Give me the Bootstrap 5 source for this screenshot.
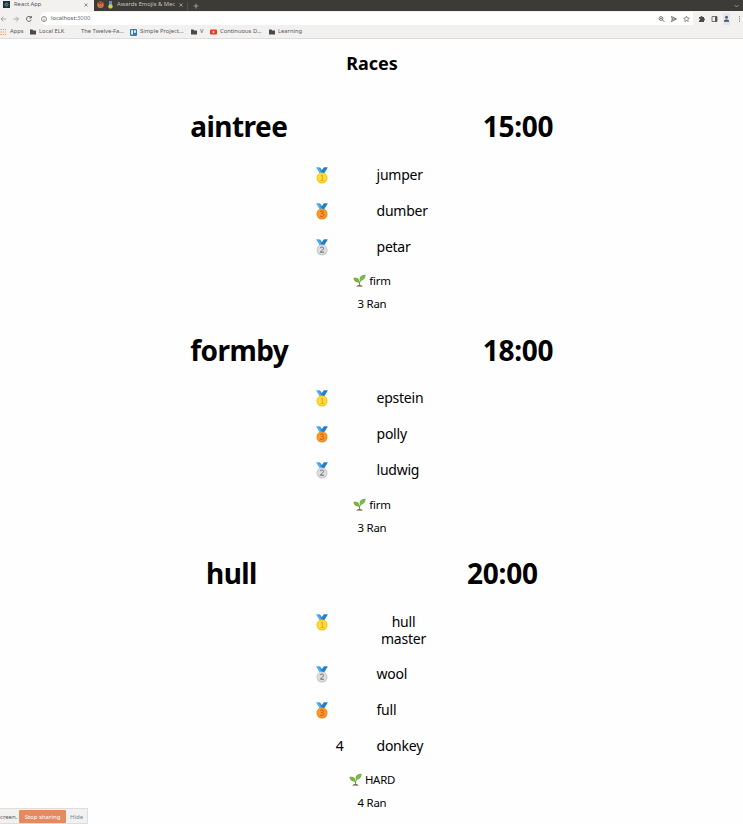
<!DOCTYPE html>
<html lang="en">
<head>
<meta charset="utf-8">
<title>React App</title>
<link href="https://cdn.jsdelivr.net/npm/bootstrap@5.3.0/dist/css/bootstrap.min.css" rel="stylesheet">
<style>
body{width:743px;height:824px;overflow:hidden;background:#fefefe;color:#000;font-family:"Noto Sans",sans-serif;position:relative}
svg{display:block;flex:none}
.chrome{font-size:5.8px;line-height:1;color:#555;font-family:"Noto Sans",sans-serif}
.tabs{height:11px;background:#3c3b37;color:#c4c2bc}
.tab-on{width:94px;height:11px;background:#f2f1f0;color:#555;padding:0 6px 2px 3px}
.tab-off{width:93px;padding:0 4px 2px 3px}
.tools{height:14px;background:#f2f1f0;padding:1px 1px 0 0}
.address{background:#fff;height:13px;width:653px;padding:1px 3px 0 1px;margin-left:8px;border-radius:6px 0 0 6px}
.marks{height:14px;background:#f2f1f0;border-bottom:1px solid #dedddc}
.marks .mk{gap:3px;height:13px;padding-top:1px;white-space:nowrap}
.w-a{width:29px}.w-b{width:52px}.w-c{width:49px}.w-d{width:61px}.w-e{width:19px}.w-f{width:59px}
.title{font-size:18px;font-weight:700;line-height:24px;margin:12px 0 27px;padding-left:1px}
.race{height:223.7px}
.race-head{height:48px;gap:4px;font-size:28px;font-weight:700;line-height:48px;letter-spacing:-.55px;margin-bottom:7px}
.race-head span{white-space:nowrap}
.venue{width:98px}.venue.short{width:51px}
.race-head .hour{width:70px;letter-spacing:-.25px}
.runner{min-height:36px;padding-left:315.5px;font-size:14px;line-height:16.5px;letter-spacing:-.23px}
.runner.two{min-height:52px;padding-top:10px}
.place{width:28px;margin-right:33px}
.horse{width:54px}
.info{font-size:11.4px;line-height:23px;letter-spacing:-.22px;padding-left:1px}
.going{margin-top:4px;gap:3px}
.share{position:absolute;left:0;bottom:0;width:88px;height:16px;background:#f2f1f0;border:1px solid #dfdedd;border-left:0;font-size:6px;line-height:1;color:#555;white-space:nowrap;padding-top:1px}
.share .crop{width:19px}
.stop{width:47px;height:13px;background:#e58a5f;color:#fff;border-radius:1px;margin-right:4px}
.hide{color:#6f8796}
</style>
<script src="https://cdn.jsdelivr.net/npm/bootstrap@5.3.0/dist/js/bootstrap.bundle.min.js"></script>
</head>
<body>
<svg width="0" height="0" class="position-absolute">
<defs>
<symbol id="ribbon" viewBox="0 0 12 17"><path d="M.3.5h3.8L6 3.2 7.9.5h3.8L8.2 6H3.8z" fill="#2e94df"/><path d="M7.9.5h3.8L8.2 6H5.1L4.6 5z" fill="#2380c8"/><path d="M.3.500h2L5.800 6h-2z" fill="#55b4ef"/></symbol>
<symbol id="m1" viewBox="0 0 12 17"><use href="#ribbon" width="12" height="17"/><circle cx="6" cy="11" r="5.500" fill="#f0c41d"/><circle cx="6" cy="10.800" r="4.600" fill="#ffdc35"/><path d="M4.800 9l1.500-1v5.400M4.800 13.400h2.800" fill="none" stroke="#e0a91b" stroke-width="1"/></symbol>
<symbol id="m2" viewBox="0 0 12 17"><use href="#ribbon" width="12" height="17"/><circle cx="6" cy="11" r="5.500" fill="#c6c7c9"/><circle cx="6" cy="10.800" r="4.600" fill="#dddee0"/><path d="M4.200 9.200C4.500 7.500 7.800 7.700 7.500 9.500 7.300 10.800 5.500 11.700 4.300 13.200h3.600" fill="none" stroke="#66696d" stroke-width="1"/></symbol>
<symbol id="m3" viewBox="0 0 12 17"><use href="#ribbon" width="12" height="17"/><circle cx="6" cy="11" r="5.500" fill="#ee8719"/><circle cx="6" cy="10.800" r="4.600" fill="#fa9a2c"/><path d="M4.200 8.600C5 7.600 7.600 7.800 7.400 9.300 7.200 10.400 6.400 10.500 5.500 10.500 8.800 10.500 8.200 13.500 6 13.500 5 13.500 4.400 13.200 4 12.700" fill="none" stroke="#c95a16" stroke-width="1"/></symbol>
<symbol id="sprout" viewBox="0 0 13 13"><path d="M6.800 12C6.500 9 6.200 8 4.700 6.400M6.500 10C6.600 8 7.300 6.400 9.500 4" fill="none" stroke="#659238" stroke-width="1"/><path d="M.3 4.200C3 3.200 6.600 4.200 6.400 8.400 3.500 9 1.200 7.300.3 4.200z" fill="#6eaa3d"/><path d="M12.700.8C9.200.7 5.600 2.400 6.800 6.900 10.800 7 12.300 4.200 12.700.8z" fill="#75b344"/><path d="M7.500 6L11.500 2M1.500 4.800L5.600 7.300" stroke="#9bcf6c" stroke-width=".6"/><path d="M3.200 12.600C4 10.900 9 10.900 9.800 12.600z" fill="#6b4638"/></symbol>
<symbol id="folder" viewBox="0 0 6 6"><path d="M0 .6h2.500l.6.8H6v4H0z" fill="#4b4a48"/></symbol>
</defs>
</svg>

<header class="chrome d-flex flex-column">
  <div class="tabs d-flex align-items-center">
    <div class="tab-on d-flex align-items-center">
      <svg width="7" height="7" viewBox="0 0 7 7"><path d="M0 0h7v7H0z" fill="#222b33"/><g fill="none" stroke="#55afc7" stroke-width=".5"><ellipse cx="3.500" cy="3.500" rx="2.200" ry=".9"/><ellipse cx="3.500" cy="3.500" rx=".9" ry="2.200"/></g></svg>
      <span class="me-auto ps-1">React App</span>
      <svg width="4" height="4" viewBox="0 0 4 4"><path d="M.5.5l3 3m0-3l-3 3" stroke="#666" stroke-width=".7"/></svg>
    </div>
    <div class="tab-off d-flex align-items-center">
      <svg width="7" height="7" viewBox="0 0 7 7"><circle cx="3.500" cy="3.700" r="3.200" fill="#e27b43"/><path d="M.6 1.500L2 .5l1.500.8L5 .5l1.400 1-.7 1.200H1.200z" fill="#a6462b"/><path d="M2 3.500h1m1 0h1M2 5.200h3" stroke="#8a4030" stroke-width=".6"/></svg>
      <svg class="ms-1" width="5" height="8" viewBox="0 0 5 8"><path d="M1 0h3v4H1z" fill="#4698ce"/><circle cx="2.500" cy="5.400" r="2.200" fill="#e5c747"/></svg>
      <span class="ms-1 me-auto text-nowrap">Awards Emojis &amp; Mec</span>
      <svg width="4" height="4" viewBox="0 0 4 4"><path d="M.5.5l3 3m0-3l-3 3" stroke="#bbb" stroke-width=".7"/></svg>
    </div>
    <svg width="12" height="8" viewBox="0 0 12 8"><path d="M.5 0v8" stroke="#66645e" stroke-width=".6"/><path d="M9 1.500v5M6.500 4h5" stroke="#bbb" stroke-width=".7"/></svg>
    <svg class="ms-auto me-1" width="5" height="4" viewBox="0 0 5 4"><path d="M.5 1l2 2 2-2" fill="none" stroke="#aaa" stroke-width=".8"/></svg>
  </div>
  <div class="tools d-flex align-items-center">
    <svg width="32" height="8" viewBox="0 0 32 8" fill="none" stroke="#999" stroke-width=".8"><path d="M6 4H1m2.400-2.400L1 4l2.400 2.400M13.500 4h5m-2.400-2.400L18.500 4l-2.400 2.400"/><path d="M31 2.400A2.500 2.500 0 1 0 31.300 4.800M31.300 1v2h-2" stroke="#444"/></svg>
    <div class="address d-flex align-items-center">
      <svg class="me-1" width="6" height="6" viewBox="0 0 5 5" fill="none" stroke="#666" stroke-width=".6"><circle cx="2.500" cy="2.500" r="2.100"/><path d="M2.500 1.200v.5m0 .6v1.600"/></svg>
      <span>localhost:<span class="text-secondary">3000</span></span>
      <svg class="ms-auto" width="33" height="8" viewBox="0 0 33 8" fill="none" stroke="#555" stroke-width=".8"><circle cx="4" cy="3.500" r="1.900"/><path d="M5.500 5l2 2M3 3.500h2"/><path d="M14.500 1.500L19.500 4l-5 2.500.8-2.500zM15 4h3"/><path d="M29.500 1.200l.8 1.800 2 .2-1.500 1.300.4 2-1.700-1-1.700 1 .4-2-1.500-1.300 2-.2z" stroke-width=".65"/></svg>
    </div>
    <svg class="ms-auto" width="45" height="12" viewBox="0 0 45 12"><path d="M2 4h1.500a1 1 0 0 1 2 0H7v1.500a1 1 0 0 1 0 2V9H2V7.500a1 1 0 0 0 0-2z" fill="#4b4b4b"/><path d="M15 3.500h5v5h-5z" fill="none" stroke="#555" stroke-width=".8"/><path d="M18 3.500h2v5h-2z" fill="#555"/><path d="M26 0h7v12h-7z" fill="#e2e6f1"/><circle cx="29.500" cy="4.300" r="1.500" fill="#555e6b"/><path d="M27 8.700V7.500q2.500-2 5 0v1.200z" fill="#46505d"/><path d="M42 3.300h1v1h-1zm0 2.200h1v1h-1zm0 2.200h1v1h-1z" fill="#666"/></svg>
  </div>
  <div class="marks d-flex">
    <div class="mk w-a d-flex align-items-center"><svg width="7" height="6" viewBox="0 0 7 6"><path d="M.5 0h1v1h-1zM.5 2.500h1v1h-1zM.5 5h1v1h-1z" fill="#d97857"/><path d="M2.800 0h1v1h-1zM2.800 2.500h1v1h-1z" fill="#b7954f"/><path d="M5 0h1v1H5zM5 2.500h1v1H5zM2.800 5h1v1h-1zM5 5h1v1H5z" fill="#d89b43"/></svg>Apps</div>
    <div class="mk w-b d-flex align-items-center"><svg width="7" height="6"><use href="#folder" x="1" width="6" height="6"/></svg>Local ELK</div>
    <div class="mk w-c d-flex align-items-center"><span>The Twelve-Fa...</span></div>
    <div class="mk w-d d-flex align-items-center"><svg width="7" height="7" viewBox="0 0 7 7"><rect width="7" height="7" rx="1" fill="#287fc2"/><path d="M1.200 1.200h1.800v4.200H1.200zm2.900 0h1.700v2.500H4.100z" fill="#fff"/></svg>Simple Project...</div>
    <div class="mk w-e d-flex align-items-center"><svg width="6" height="6"><use href="#folder" width="6" height="6"/></svg>V</div>
    <div class="mk w-f d-flex align-items-center"><svg width="7" height="6" viewBox="0 0 7 6"><rect y=".5" width="7" height="5" rx="1" fill="#e43b25"/><path d="M2.700 1.700v2.600L5 3z" fill="#fff"/></svg>Continuous D...</div>
    <div class="mk d-flex align-items-center"><svg width="6" height="6"><use href="#folder" width="6" height="6"/></svg>Learning</div>
  </div>
</header>

<main>
  <h1 class="title text-center">Races</h1>
  <section class="race">
    <div class="race-head d-flex justify-content-evenly"><span class="venue">aintree</span><span class="hour">15:00</span></div>
    <div class="runner d-flex align-items-center"><div class="place"><svg width="12" height="17"><use href="#m1"/></svg></div><div class="horse">jumper</div></div>
    <div class="runner d-flex align-items-center"><div class="place"><svg width="12" height="17"><use href="#m3"/></svg></div><div class="horse">dumber</div></div>
    <div class="runner d-flex align-items-center"><div class="place"><svg width="12" height="17"><use href="#m2"/></svg></div><div class="horse">petar</div></div>
    <div class="info going d-flex justify-content-center align-items-center"><svg width="13" height="13"><use href="#sprout"/></svg><span>firm</span></div>
    <div class="info text-center">3 Ran</div>
  </section>
  <section class="race">
    <div class="race-head d-flex justify-content-evenly"><span class="venue">formby</span><span class="hour">18:00</span></div>
    <div class="runner d-flex align-items-center"><div class="place"><svg width="12" height="17"><use href="#m1"/></svg></div><div class="horse">epstein</div></div>
    <div class="runner d-flex align-items-center"><div class="place"><svg width="12" height="17"><use href="#m3"/></svg></div><div class="horse">polly</div></div>
    <div class="runner d-flex align-items-center"><div class="place"><svg width="12" height="17"><use href="#m2"/></svg></div><div class="horse">ludwig</div></div>
    <div class="info going d-flex justify-content-center align-items-center"><svg width="13" height="13"><use href="#sprout"/></svg><span>firm</span></div>
    <div class="info text-center">3 Ran</div>
  </section>
  <section class="race">
    <div class="race-head d-flex justify-content-evenly"><span class="venue short">hull</span><span class="hour">20:00</span></div>
    <div class="runner two d-flex align-items-start"><div class="place"><svg width="12" height="17"><use href="#m1"/></svg></div><div class="horse text-center">hull master</div></div>
    <div class="runner d-flex align-items-center"><div class="place"><svg width="12" height="17"><use href="#m2"/></svg></div><div class="horse">wool</div></div>
    <div class="runner d-flex align-items-center"><div class="place"><svg width="12" height="17"><use href="#m3"/></svg></div><div class="horse">full</div></div>
    <div class="runner d-flex align-items-center"><div class="place text-end">4</div><div class="horse">donkey</div></div>
    <div class="info going d-flex justify-content-center align-items-center"><svg width="13" height="13"><use href="#sprout"/></svg><span>HARD</span></div>
    <div class="info text-center">4 Ran</div>
  </section>
</main>

<aside class="share d-flex align-items-center"><span class="crop">creen.</span><span class="stop d-flex align-items-center justify-content-center">Stop sharing</span><span class="hide">Hide</span></aside>
</body>
</html>
